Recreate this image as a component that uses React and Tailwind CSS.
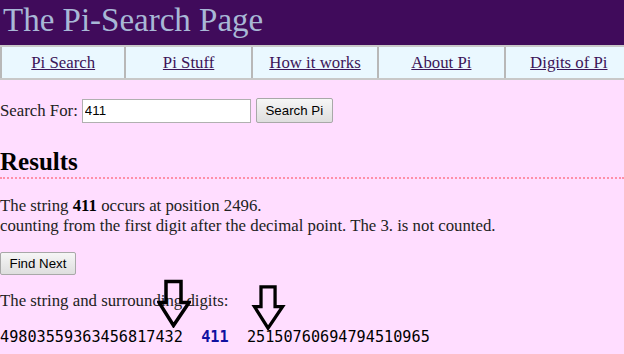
import React from 'react'

const serif = { fontFamily: '"Liberation Serif", "Times New Roman", serif' }
const sans = { fontFamily: '"Liberation Sans", Arial, sans-serif' }

const links = ['Pi Search', 'Pi Stuff', 'How it works', 'About Pi', 'Digits of Pi']

function DownArrow({ className }) {
  return (
    <svg className={className} viewBox="0 0 34 48" fill="none" stroke="#000" strokeWidth="3.5" strokeLinejoin="miter">
      <path d="M9 2 H24 V23 H32 L16.5 46 L2 23 H9 Z" />
    </svg>
  )
}

export default function App() {
  return (
    <div className="min-h-screen overflow-hidden bg-[#ffddff] text-[16.8px] text-[#222]" style={serif}>
      <header className="h-[45px] bg-[#400b5b] pl-[3px]">
        <h1 className="text-[33px] leading-[40px] text-[#a8b8d6]">The Pi-Search Page</h1>
      </header>

      <nav className="grid grid-cols-5 w-[632px] h-[35px] bg-[#eaf8ff] border-y-2 border-[#c8c8c8]">
        {links.map((l, i) => (
          <div key={l} className={`flex items-center justify-center border-[#b8b8b8] ${i === 0 ? 'border-l-2' : ''} ${i < 4 ? 'border-r-2' : ''}`}>
            <a href="#" className="underline text-[#3c1458] leading-none pt-[1px]">{l}</a>
          </div>
        ))}
      </nav>

      <div className="flex items-center mt-[18px] h-[25px]">
        <span>Search For:</span>
        <input
          defaultValue="411"
          className="ml-[4px] w-[169px] h-[24px] bg-white border border-[#b0b0b0] px-[2px] text-[13.3px] text-black outline-none"
          style={sans}
        />
        <button
          className="ml-[5px] w-[77px] h-[25px] rounded-[2px] border border-[#a8a8a8] bg-gradient-to-b from-[#f6f6f6] to-[#dedede] text-[13.3px] text-black"
          style={sans}
        >
          Search Pi
        </button>
      </div>

      <h2 className="mt-[25px] text-[25px] font-bold leading-[28px] text-black pb-[1px] border-b-2 border-dotted border-[#ff8fa8]">Results</h2>

      <p className="mt-[17px] leading-[20px]">
        The string <b className="text-black">411</b> occurs at position 2496.<br />
        counting from the first digit after the decimal point. The 3. is not counted.
      </p>

      <button
        className="mt-[16px] block w-[76px] h-[23px] rounded-[2px] border border-[#a8a8a8] bg-gradient-to-b from-[#f6f6f6] to-[#dedede] text-[13.3px] text-black"
        style={sans}
      >
        Find Next
      </button>

      <div className="relative pt-[16px]">
        <p className="leading-[20px]">The string and surrounding digits:</p>
        <pre
          className="mt-[16px] text-[15.2px] leading-[20px] text-black"
          style={{ fontFamily: '"DejaVu Sans Mono", monospace' }}
        >
          49803559363456817432  <span className="text-[#1010a0] font-bold">411</span>  25150760694794510965
        </pre>
        <DownArrow className="absolute left-[157px] top-[4px] w-[34px] h-[49px]" />
        <DownArrow className="absolute left-[251px] top-[10px] w-[35px] h-[45px]" />
      </div>
    </div>
  )
}
